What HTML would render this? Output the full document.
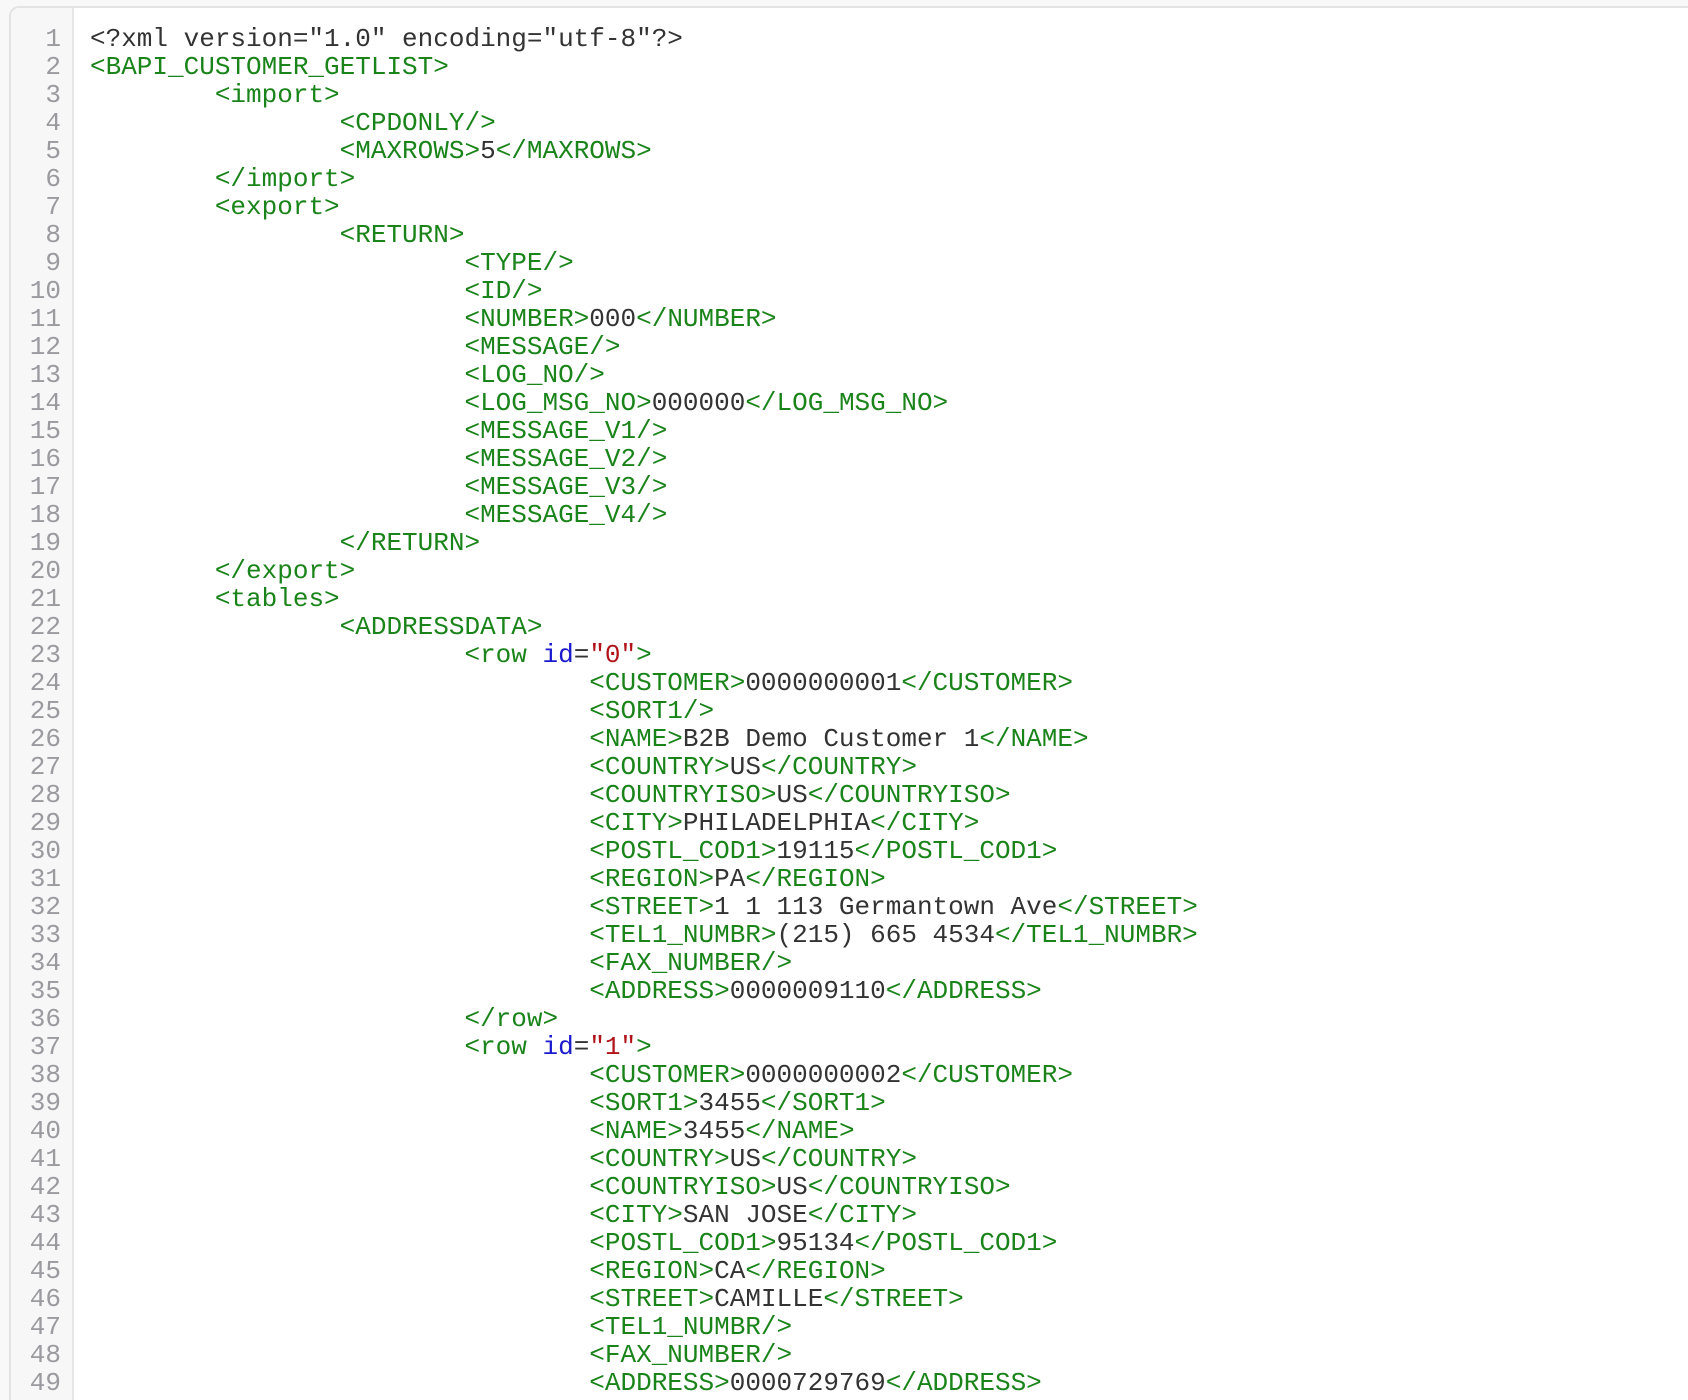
<!DOCTYPE html>
<html><head><meta charset="utf-8"><style>
html,body{margin:0;padding:0;width:1688px;height:1398px;overflow:hidden;background:#f8f8f8}
.card{position:absolute;left:9px;top:6px;width:1700px;height:1392px;background:#fff;border:2px solid #e3e3e3;border-bottom:none;border-radius:10px 10px 0 0;overflow:hidden}
.gut{position:absolute;left:0;top:0;width:61px;height:100%;background:#f7f7f7;border-right:2px solid #e6e6e6}
pre{margin:0;font-family:"Courier New","Liberation Mono",monospace;font-size:26px;line-height:28px;tab-size:8;-moz-tab-size:8}
.nums{position:absolute;left:0;top:17px;width:50px;text-align:right;color:#9a9a9f}
.code{position:absolute;left:79px;top:17px;color:#333}
.t{color:#1a841a}.a{color:#1a1acc}.v{color:#b0141a}
</style></head><body><div class="card"><div class="gut"></div>
<pre class="nums">1
2
3
4
5
6
7
8
9
10
11
12
13
14
15
16
17
18
19
20
21
22
23
24
25
26
27
28
29
30
31
32
33
34
35
36
37
38
39
40
41
42
43
44
45
46
47
48
49</pre>
<pre class="code">&lt;?xml version="1.0" encoding="utf-8"?&gt;
<span class="t">&lt;BAPI_CUSTOMER_GETLIST&gt;</span>
	<span class="t">&lt;import&gt;</span>
		<span class="t">&lt;CPDONLY/&gt;</span>
		<span class="t">&lt;MAXROWS&gt;</span>5<span class="t">&lt;/MAXROWS&gt;</span>
	<span class="t">&lt;/import&gt;</span>
	<span class="t">&lt;export&gt;</span>
		<span class="t">&lt;RETURN&gt;</span>
			<span class="t">&lt;TYPE/&gt;</span>
			<span class="t">&lt;ID/&gt;</span>
			<span class="t">&lt;NUMBER&gt;</span>000<span class="t">&lt;/NUMBER&gt;</span>
			<span class="t">&lt;MESSAGE/&gt;</span>
			<span class="t">&lt;LOG_NO/&gt;</span>
			<span class="t">&lt;LOG_MSG_NO&gt;</span>000000<span class="t">&lt;/LOG_MSG_NO&gt;</span>
			<span class="t">&lt;MESSAGE_V1/&gt;</span>
			<span class="t">&lt;MESSAGE_V2/&gt;</span>
			<span class="t">&lt;MESSAGE_V3/&gt;</span>
			<span class="t">&lt;MESSAGE_V4/&gt;</span>
		<span class="t">&lt;/RETURN&gt;</span>
	<span class="t">&lt;/export&gt;</span>
	<span class="t">&lt;tables&gt;</span>
		<span class="t">&lt;ADDRESSDATA&gt;</span>
			<span class="t">&lt;row</span> <span class="a">id</span>=<span class="v">"0"</span><span class="t">&gt;</span>
				<span class="t">&lt;CUSTOMER&gt;</span>0000000001<span class="t">&lt;/CUSTOMER&gt;</span>
				<span class="t">&lt;SORT1/&gt;</span>
				<span class="t">&lt;NAME&gt;</span>B2B Demo Customer 1<span class="t">&lt;/NAME&gt;</span>
				<span class="t">&lt;COUNTRY&gt;</span>US<span class="t">&lt;/COUNTRY&gt;</span>
				<span class="t">&lt;COUNTRYISO&gt;</span>US<span class="t">&lt;/COUNTRYISO&gt;</span>
				<span class="t">&lt;CITY&gt;</span>PHILADELPHIA<span class="t">&lt;/CITY&gt;</span>
				<span class="t">&lt;POSTL_COD1&gt;</span>19115<span class="t">&lt;/POSTL_COD1&gt;</span>
				<span class="t">&lt;REGION&gt;</span>PA<span class="t">&lt;/REGION&gt;</span>
				<span class="t">&lt;STREET&gt;</span>1 1 113 Germantown Ave<span class="t">&lt;/STREET&gt;</span>
				<span class="t">&lt;TEL1_NUMBR&gt;</span>(215) 665 4534<span class="t">&lt;/TEL1_NUMBR&gt;</span>
				<span class="t">&lt;FAX_NUMBER/&gt;</span>
				<span class="t">&lt;ADDRESS&gt;</span>0000009110<span class="t">&lt;/ADDRESS&gt;</span>
			<span class="t">&lt;/row&gt;</span>
			<span class="t">&lt;row</span> <span class="a">id</span>=<span class="v">"1"</span><span class="t">&gt;</span>
				<span class="t">&lt;CUSTOMER&gt;</span>0000000002<span class="t">&lt;/CUSTOMER&gt;</span>
				<span class="t">&lt;SORT1&gt;</span>3455<span class="t">&lt;/SORT1&gt;</span>
				<span class="t">&lt;NAME&gt;</span>3455<span class="t">&lt;/NAME&gt;</span>
				<span class="t">&lt;COUNTRY&gt;</span>US<span class="t">&lt;/COUNTRY&gt;</span>
				<span class="t">&lt;COUNTRYISO&gt;</span>US<span class="t">&lt;/COUNTRYISO&gt;</span>
				<span class="t">&lt;CITY&gt;</span>SAN JOSE<span class="t">&lt;/CITY&gt;</span>
				<span class="t">&lt;POSTL_COD1&gt;</span>95134<span class="t">&lt;/POSTL_COD1&gt;</span>
				<span class="t">&lt;REGION&gt;</span>CA<span class="t">&lt;/REGION&gt;</span>
				<span class="t">&lt;STREET&gt;</span>CAMILLE<span class="t">&lt;/STREET&gt;</span>
				<span class="t">&lt;TEL1_NUMBR/&gt;</span>
				<span class="t">&lt;FAX_NUMBER/&gt;</span>
				<span class="t">&lt;ADDRESS&gt;</span>0000729769<span class="t">&lt;/ADDRESS&gt;</span></pre>
</div></body></html>
